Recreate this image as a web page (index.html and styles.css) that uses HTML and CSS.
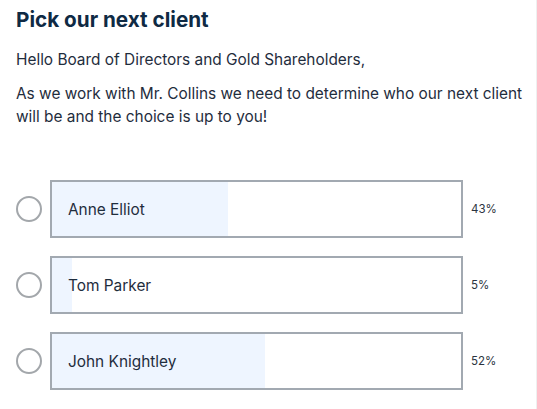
FILE: index.html
```html
<!DOCTYPE html>
<html>
<head>
<meta charset="utf-8">
<link rel="stylesheet" href="styles.css">
</head>
<body>
<div class="page">
  <h1 class="title">Pick our next client</h1>
  <p class="text greeting">Hello Board of Directors and Gold Shareholders,</p>
  <p class="text">As we work with Mr. Collins we need to determine who our next client will be and the choice is up to you!</p>
  <div class="poll">
    <div class="option">
      <span class="radio"></span>
      <div class="bar"><div class="fill" style="width:43%"></div><span class="name">Anne Elliot</span></div>
      <span class="pct">43%</span>
    </div>
    <div class="option">
      <span class="radio"></span>
      <div class="bar"><div class="fill" style="width:5%"></div><span class="name">Tom Parker</span></div>
      <span class="pct">5%</span>
    </div>
    <div class="option">
      <span class="radio"></span>
      <div class="bar"><div class="fill" style="width:52%"></div><span class="name">John Knightley</span></div>
      <span class="pct">52%</span>
    </div>
  </div>
</div>
</body>
</html>
```

FILE: styles.css
```css
html, body {
  margin: 0;
  padding: 0;
  background: #ffffff;
}
body {
  font-family: Inter, "Liberation Sans", sans-serif;
  color: #1f2d3d;
  height: 409px;
  overflow: hidden;
  border-right: 1px solid #eef0f0;
  box-sizing: border-box;
}
.page {
  padding: 7px 0 0 16px;
  width: 521px;
}
.title {
  margin: 0;
  font-size: 20.7px;
  line-height: 26px;
  font-weight: 700;
  color: #0f2a44;
}
.text {
  margin: 0;
  font-size: 15.4px;
  line-height: 23px;
  width: 515px;
}
.greeting {
  margin: 15px 0 11px;
}
.poll {
  margin-top: 52px;
  display: flex;
  flex-direction: column;
  gap: 18px;
}
.option {
  display: flex;
  align-items: center;
}
.radio {
  width: 22px;
  height: 22px;
  border: 2px solid #a3a7ab;
  border-radius: 50%;
  flex: none;
}
.bar {
  margin-left: 8px;
  width: 409px;
  height: 54px;
  border: 2px solid #a2a9b1;
  position: relative;
  display: flex;
  align-items: center;
  flex: none;
}
.fill {
  position: absolute;
  left: 0;
  top: 0;
  bottom: 0;
  background: #eef5ff;
}
.name {
  position: relative;
  margin-left: 16px;
  font-size: 15.4px;
  color: #1f2d3d;
}
.pct {
  margin-left: 8px;
  font-size: 11.5px;
  color: #2b3440;
}
```
